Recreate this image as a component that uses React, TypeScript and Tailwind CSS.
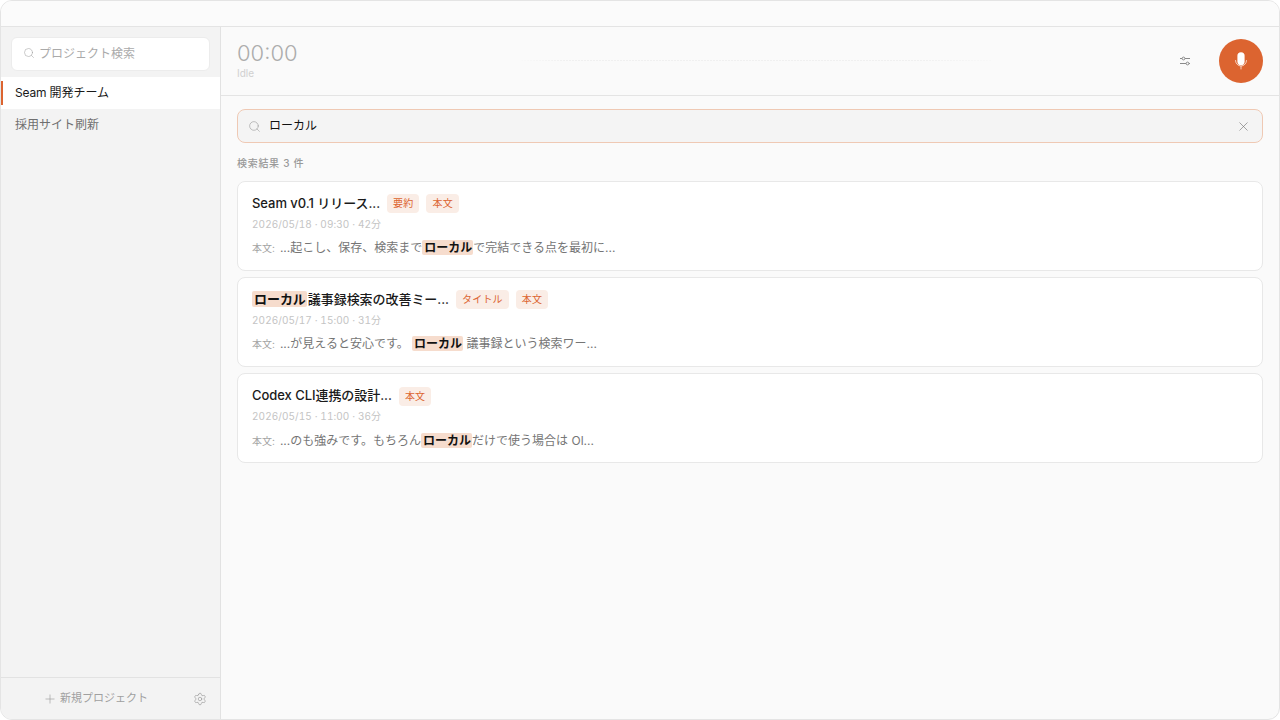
import type { ReactNode } from "react";
import { Search, X, Plus, Settings } from "lucide-react";

const font = "font-['Inter','Noto_Sans_CJK_JP',sans-serif]";

function Hl({ children }: { children: string }) {
  return <mark className="bg-[#f6dccd] text-[#111111] font-semibold rounded-[2px] pl-[2px] pr-[1px]">{children}</mark>;
}

function Tag({ children, low }: { children: string; low?: boolean }) {
  return (
    <span
      className={`h-[19px] px-[6px] rounded-[4px] bg-[#faede6] text-[#dc6430] text-[10px] leading-[19px] shrink-0 tracking-[0.2px] ${
        low ? "translate-y-[1px]" : ""
      }`}
    >
      {children}
    </span>
  );
}

function Card({
  title,
  tags,
  meta,
  body,
  low,
}: {
  title: ReactNode;
  tags: string[];
  meta: string;
  body: ReactNode;
  low?: boolean;
}) {
  return (
    <div className="h-[90px] rounded-[8px] border border-[#e8e8e8] bg-white px-[14px] pt-[11px]">
      <div className="flex items-center gap-[7px] h-[20px]">
        <div className="text-[13px] leading-[20px] font-medium tracking-[-0.05px] text-[#1a1a1a] whitespace-nowrap">{title}</div>
        {tags.map((t) => (
          <Tag key={t} low={low}>
            {t}
          </Tag>
        ))}
      </div>
      <div className="mt-[4px] text-[10px] leading-[14px] text-[#c4c4c4] tracking-[0.08px] tabular-nums">{meta}</div>
      <div className={`${low ? "mt-[8px]" : "mt-[7px]"} flex items-baseline gap-[5px] whitespace-nowrap`}>
        <span className="text-[10px] text-[#a3a3a3]">本文:</span>
        <span className="text-[12px] leading-[20px] text-[#757575]">{body}</span>
      </div>
    </div>
  );
}

export default function App() {
  return (
    <div className={`${font} w-[1280px] h-[720px] bg-white overflow-hidden`}>
      <div className="w-full h-full flex flex-col rounded-[12px] border border-[#e4e4e4] bg-[#fafafa] overflow-hidden">
        <div className="h-[26px] shrink-0 border-b border-[#e4e4e4] bg-[#fbfbfb]" />
        <div className="flex-1 flex min-h-0">
          <aside className="w-[220px] shrink-0 flex flex-col bg-[#f3f3f3] border-r border-[#e2e2e2]">
            <div className="px-[10px] pt-[10px]">
              <div className="h-[34px] flex items-center gap-[4px] pl-[11px] rounded-[6px] bg-white border border-[#ececec]">
                <Search size={12} strokeWidth={1.1} className="text-[#a0a0a0] -mt-[2px]" />
                <span className="text-[12px] text-[#aaaaaa]">プロジェクト検索</span>
              </div>
            </div>
            <div className="mt-[6px]">
              <div className="relative h-[32px] flex items-center pl-[14px] bg-white text-[12px] text-[#1a1a1a]">
                <span className="absolute left-0 top-[4px] h-[24px] w-[2px] bg-[#dc6430]" />
                <span>
                  <span className="tracking-[-0.2px]">Seam </span>開発チーム
                </span>
              </div>
              <div className="h-[32px] flex items-center pl-[14px] text-[12px] text-[#6f6f6f]">採用サイト刷新</div>
            </div>
            <div className="mt-auto h-[42px] border-t border-[#e2e2e2] flex items-center relative">
              <div className="flex-1 flex items-center justify-center gap-[3px] pr-[30px] text-[11px] text-[#a0a0a0]">
                <Plus size={14} strokeWidth={1.1} className="text-[#9a9a9a]" />
                <span>新規プロジェクト</span>
              </div>
              <Settings size={14} strokeWidth={1} className="text-[#8f8f8f] absolute left-[192px]" />
            </div>
          </aside>
          <main className="flex-1 min-w-0 flex flex-col">
            <header className="h-[69px] shrink-0 border-b border-[#e4e4e4] flex items-center pl-[16px] pr-[16px]">
              <div className="w-[283px] shrink-0 mb-[4px]">
                <div className="text-[22px] leading-[26px] font-light text-[#acacac]">00:00</div>
                <div className="text-[10px] leading-[12px] mt-[1px] text-[#d0d0d0]">Idle</div>
              </div>
              <div className="flex-1 min-w-0">
                <svg width="480" height="3" viewBox="0 0 480 3" className="block mt-[-1px]">
                  <defs>
                    <linearGradient id="wave" gradientUnits="userSpaceOnUse" x1="0" x2="480" y1="0" y2="0">
                      <stop offset="0" stopColor="#f9f9f9" />
                      <stop offset="0.1" stopColor="#f0f0f0" />
                      <stop offset="0.83" stopColor="#f0f0f0" />
                      <stop offset="1" stopColor="#f9f9f9" />
                    </linearGradient>
                  </defs>
                  <line x1="1" y1="1.5" x2="471" y2="1.5" stroke="url(#wave)" strokeWidth="1" strokeDasharray="2 1" />
                </svg>
              </div>
              <svg width="12" height="12" viewBox="0 0 12 12" fill="none" stroke="#8a8a8a" strokeWidth="1" className="mr-[28px]">
                <path d="M1 3.5H11M1 8.5H11" />
                <circle cx="4.5" cy="3.5" r="1.4" fill="#fafafa" />
                <circle cx="8.5" cy="8.5" r="1.4" fill="#fafafa" />
              </svg>
              <button className="w-[44px] h-[44px] rounded-full bg-[#dc6430] flex items-center justify-center">
                <svg width="16" height="20" viewBox="0 0 16 20" fill="none">
                  <rect x="4.4" y="1.2" width="7.2" height="12.8" rx="3.6" fill="#ffffff" />
                  <path d="M2.5 9.5a5.5 5.5 0 0 0 11 0M8 15v3" stroke="#ffffff" strokeOpacity="0.7" strokeWidth="1" strokeLinecap="round" />
                </svg>
              </button>
            </header>
            <div className="flex-1 px-[16px] pt-[13px]">
              <div className="h-[34px] flex items-center rounded-[8px] border border-[#efc9b4] bg-[#f4f4f4] pl-[10px] pr-[11px]">
                <Search size={13} strokeWidth={1.1} className="text-[#9a9a9a]" />
                <span className="ml-[8px] text-[12px] text-[#111111]">ローカル</span>
                <X size={15} strokeWidth={1} className="ml-auto text-[#707070]" />
              </div>
              <div className="mt-[13px] h-[14px] text-[10px] leading-[14px] font-medium text-[#999999] tracking-[0.7px]">検索結果 3 件</div>
              <div className="mt-[11px] flex flex-col gap-[6px]">
                <Card
                  title="Seam v0.1 リリース..."
                  tags={["要約", "本文"]}
                  meta="2026/05/18 · 09:30 · 42分"
                  body={<>...起こし、保存、検索まで<Hl>ローカル</Hl>で完結できる点を最初に...</>}
                />
                <Card
                  title={<><Hl>ローカル</Hl><span className="ml-[1px]">議事録検索の改善ミー...</span></>}
                  tags={["タイトル", "本文"]}
                  meta="2026/05/17 · 15:00 · 31分"
                  body={<>...が見えると安心です。 <Hl>ローカル</Hl> 議事録という検索ワー...</>}
                />
                <Card
                  low
                  title="Codex CLI連携の設計..."
                  tags={["本文"]}
                  meta="2026/05/15 · 11:00 · 36分"
                  body={<>...のも強みです。もちろん<Hl>ローカル</Hl>だけで使う場合は Ol...</>}
                />
              </div>
            </div>
          </main>
        </div>
      </div>
    </div>
  );
}
